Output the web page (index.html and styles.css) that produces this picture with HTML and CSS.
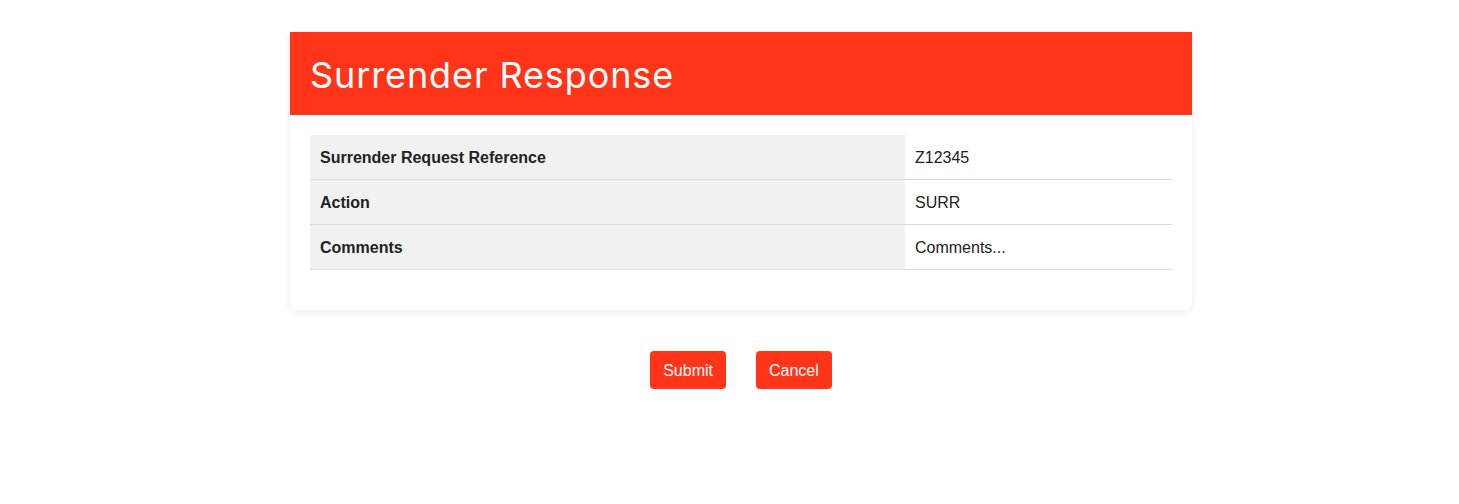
FILE: index.html
```html
<!DOCTYPE html>
<html>
<head>
<meta charset="utf-8">
<link rel="stylesheet" href="styles.css">
</head>
<body>
<div class="page">
  <div class="card">
    <div class="card-header"><h1 class="title">Surrender Response</h1></div>
    <div class="card-body">
      <table class="details">
        <tr><th>Surrender Request Reference</th><td>Z12345</td></tr>
        <tr><th>Action</th><td>SURR</td></tr>
        <tr><th>Comments</th><td>Comments...</td></tr>
      </table>
    </div>
  </div>
  <div class="actions">
    <button class="btn">Submit</button>
    <button class="btn">Cancel</button>
  </div>
</div>
</body>
</html>
```
FILE: styles.css
```css
html, body { margin: 0; padding: 0; background: #fff; }
body { font-family: "Liberation Sans", Arial, sans-serif; font-size: 16px; color: #212529; padding-left: 23px; }
.page { width: 902px; margin: 32px auto 0; }
.card { background: #fff; border-radius: 0 0 8px 8px; box-shadow: 0 2px 10px rgba(0,0,0,0.08); }
.card-header { background: #ff3418; height: 83px; display: flex; align-items: center; padding: 0 20px; }
.title { margin: 0; font-family: Inter, "Open Sans", sans-serif; font-weight: 400; font-size: 36px; color: #fff; letter-spacing: 0.9px; line-height: 1; padding-top: 2px; }
.card-body { padding: 20px 20px 40px; }
.details { width: 100%; border-collapse: collapse; }
.details th, .details td { padding: 13px 10px 11px; line-height: 20px; text-align: left; border-bottom: 1px solid #dcdcdc; }
.details th { background: #f1f1f1; font-weight: 700; color: #222; width: 575px; }
.details td { color: #222; }
.actions { display: flex; justify-content: center; gap: 30px; margin-top: 41px; }
.btn { background: #ff3418; color: #fff; border: 0; border-radius: 4px; font-family: "Liberation Sans", Arial, sans-serif; font-size: 16px; padding: 1px 13px 0; height: 38px; line-height: 37px; cursor: pointer; }
```
